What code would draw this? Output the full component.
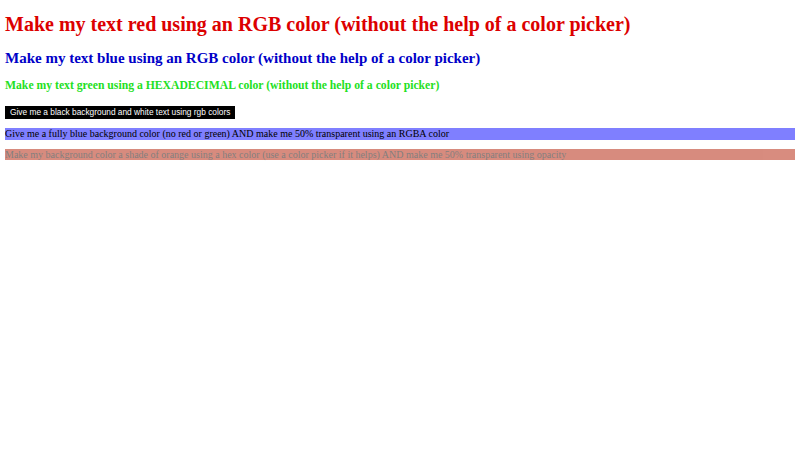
export default function App() {
  return (
    <div className="m-[5px] font-['Liberation_Serif',serif] text-[10px] text-black">
      <h1 className="my-[13.4px] text-[20px] font-bold leading-[1.15] text-[rgb(220,0,0)]">
        Make my text red using an RGB color (without the help of a color picker)
      </h1>
      <h2 className="my-[12.45px] text-[15px] font-bold leading-[1.15] text-[rgb(0,0,200)]">
        Make my text blue using an RGB color (without the help of a color picker)
      </h2>
      <h3 className="mt-[11.7px] mb-[12.6px] text-[11.7px] font-bold leading-[1.15] text-[#22e022]">
        Make my text green using a HEXADECIMAL color (without the help of a color picker)
      </h3>
      <p className="mt-[10px] mb-[9px] leading-[1.15]">
        <button
          type="button"
          className="bg-[rgb(0,0,0)] px-[5px] py-[1.5px] font-['Liberation_Sans',sans-serif] text-[8.33px] leading-[1.15] text-[rgb(255,255,255)]"
        >
          Give me a black background and white text using rgb colors
        </button>
      </p>
      <p className="mt-[9.5px] mb-[9px] bg-[rgba(0,0,255,0.5)] leading-[1.15]">
        Give me a fully blue background color (no red or green) AND make me 50% transparent using an RGBA color
      </p>
      <p className="my-[9px] bg-[#b11a00] leading-[1.15] opacity-50">
        Make my background color a shade of orange using a hex color (use a color picker if it helps) AND make me 50% transparent using opacity
      </p>
    </div>
  );
}
